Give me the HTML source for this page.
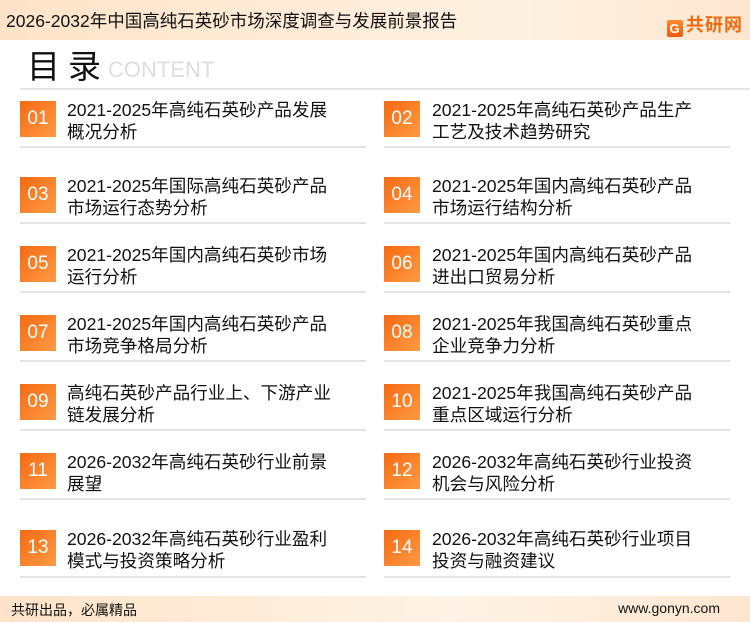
<!DOCTYPE html>
<html><head><meta charset="utf-8"><style>
body{margin:0;width:750px;height:622px;position:relative;background:#fff;font-family:"Liberation Sans","Noto Sans CJK SC",sans-serif;overflow:hidden}
.hdr{position:absolute;left:0;top:0;width:750px;height:40px;background:linear-gradient(90deg,#fde3c8,#fef1e2 70%,#fde6d0)}
.hdr .t{position:absolute;left:6px;top:10px;font-size:17.5px;line-height:22px;color:#111}
.logo{position:absolute;left:667px;top:11px;font-size:18px;font-weight:bold;color:#f06a12;letter-spacing:1px}
.logo b{display:inline-block;width:16px;height:17px;background:linear-gradient(#ff8a2a,#f05a10);border-radius:2px;vertical-align:-2px;margin-right:3px;color:#fff;font-size:13px;text-align:center;line-height:17px}
.ml{position:absolute;left:27px;top:50px;font-size:33px;line-height:33px;color:#111;letter-spacing:8px}
.ct{position:absolute;left:108px;top:58px;font-size:22px;line-height:24px;color:#ddd}
.ln0{position:absolute;left:20px;top:88px;width:730px;height:2px;background:#e6e6e6}
.box{position:absolute;width:36px;height:36px;background:linear-gradient(135deg,#f56a12,#ff9a45);color:#fff;font-size:19px;text-align:center;line-height:36px}
.tx{position:absolute;font-size:17.6px;line-height:22px;color:#111;width:320px}
.ln{position:absolute;height:2px;background:#e3e3e3;width:346px}
.ftr{position:absolute;left:0;top:596px;width:750px;height:26px;background:linear-gradient(90deg,#fde3c8,#fef3e6 60%,#fde6d0)}
.ftr .a{position:absolute;left:11px;top:4px;font-size:14px;color:#111}
.ftr .b{position:absolute;right:30px;top:4px;font-size:14px;color:#111}
</style></head><body>
<div class="hdr"><div class="t">2026-2032年中国高纯石英砂市场深度调查与发展前景报告</div><div class="logo"><b>G</b>共研网</div></div>
<div class="ml">目录</div><div class="ct">CONTENT</div>
<div class="ln0"></div>

<div class="box" style="left:20px;top:101px">01</div><div class="tx" style="left:67px;top:99px">2021-2025年高纯石英砂产品发展<br>概况分析</div><div class="ln" style="left:20px;top:146px"></div>
<div class="box" style="left:384px;top:101px">02</div><div class="tx" style="left:432px;top:99px">2021-2025年高纯石英砂产品生产<br>工艺及技术趋势研究</div><div class="ln" style="left:384px;top:146px"></div>

<div class="box" style="left:20px;top:177px">03</div><div class="tx" style="left:67px;top:175px">2021-2025年国际高纯石英砂产品<br>市场运行态势分析</div><div class="ln" style="left:20px;top:222px"></div>
<div class="box" style="left:384px;top:177px">04</div><div class="tx" style="left:432px;top:175px">2021-2025年国内高纯石英砂产品<br>市场运行结构分析</div><div class="ln" style="left:384px;top:222px"></div>

<div class="box" style="left:20px;top:246px">05</div><div class="tx" style="left:67px;top:244px">2021-2025年国内高纯石英砂市场<br>运行分析</div><div class="ln" style="left:20px;top:291px"></div>
<div class="box" style="left:384px;top:246px">06</div><div class="tx" style="left:432px;top:244px">2021-2025年国内高纯石英砂产品<br>进出口贸易分析</div><div class="ln" style="left:384px;top:291px"></div>

<div class="box" style="left:20px;top:315px">07</div><div class="tx" style="left:67px;top:313px">2021-2025年国内高纯石英砂产品<br>市场竞争格局分析</div><div class="ln" style="left:20px;top:360px"></div>
<div class="box" style="left:384px;top:315px">08</div><div class="tx" style="left:432px;top:313px">2021-2025年我国高纯石英砂重点<br>企业竞争力分析</div><div class="ln" style="left:384px;top:360px"></div>

<div class="box" style="left:20px;top:384px">09</div><div class="tx" style="left:67px;top:382px">高纯石英砂产品行业上、下游产业<br>链发展分析</div><div class="ln" style="left:20px;top:429px"></div>
<div class="box" style="left:384px;top:384px">10</div><div class="tx" style="left:432px;top:382px">2021-2025年我国高纯石英砂产品<br>重点区域运行分析</div><div class="ln" style="left:384px;top:429px"></div>

<div class="box" style="left:20px;top:453px">11</div><div class="tx" style="left:67px;top:451px">2026-2032年高纯石英砂行业前景<br>展望</div><div class="ln" style="left:20px;top:498px"></div>
<div class="box" style="left:384px;top:453px">12</div><div class="tx" style="left:432px;top:451px">2026-2032年高纯石英砂行业投资<br>机会与风险分析</div><div class="ln" style="left:384px;top:498px"></div>

<div class="box" style="left:20px;top:530px">13</div><div class="tx" style="left:67px;top:528px">2026-2032年高纯石英砂行业盈利<br>模式与投资策略分析</div><div class="ln" style="left:20px;top:576px"></div>
<div class="box" style="left:384px;top:530px">14</div><div class="tx" style="left:432px;top:528px">2026-2032年高纯石英砂行业项目<br>投资与融资建议</div><div class="ln" style="left:384px;top:576px"></div>

<div class="ftr"><div class="a">共研出品，必属精品</div><div class="b">www.gonyn.com</div></div>
</body></html>
